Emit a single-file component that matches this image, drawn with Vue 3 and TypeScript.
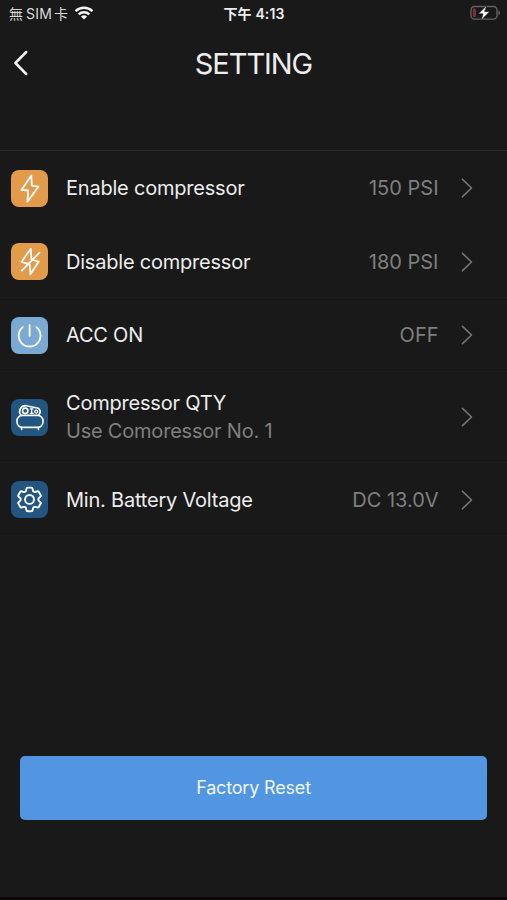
<script setup lang="ts">
type IconName = 'bolt' | 'bolt-off' | 'power' | 'compressor' | 'gear'

interface Setting {
  icon: IconName
  title: string
  note?: string
  value?: string
}

const settings: Setting[] = [
  { icon: 'bolt', title: 'Enable compressor', value: '150 PSI' },
  { icon: 'bolt-off', title: 'Disable compressor', value: '180 PSI' },
  { icon: 'power', title: 'ACC ON', value: 'OFF' },
  { icon: 'compressor', title: 'Compressor QTY', note: 'Use Comoressor No. 1' },
  { icon: 'gear', title: 'Min. Battery Voltage', value: 'DC 13.0V' },
]
</script>

<template>
  <main class="screen">
    <div class="status">
      <div class="carrier">
        <span>無<span class="latin">SIM</span>卡</span>
        <svg class="wifi" viewBox="0 0 20 14" width="20" height="14">
          <path d="M1.6 5.2a12.2 12.2 0 0 1 16.8 0M4.7 8.4a7.7 7.7 0 0 1 10.6 0" />
          <path class="dot" d="M10 13.6 6.9 10.6a4.5 4.5 0 0 1 6.2 0z" />
        </svg>
      </div>
      <div class="clock">下午 <span>4:13</span></div>
      <svg class="battery" viewBox="0 0 31 16" width="31" height="16">
        <rect class="shell" x="1" y="1.5" width="26" height="12.6" rx="3.6" />
        <path class="cap" d="M28.3 5.5c2.4.8 2.4 3.8 0 4.6z" />
        <rect class="level" x="2.8" y="3.5" width="3.2" height="8.6" rx="1" />
        <path class="charge" d="M16.6.8 8.4 8.8h4.6L11.2 15.2l8.5-8.7h-4.9z" />
      </svg>
    </div>

    <header class="bar">
      <svg class="back" viewBox="0 0 16 26" width="16" height="26">
        <path d="M13.2 2 2.4 13l10.8 11" />
      </svg>
      <h1>SETTING</h1>
    </header>

    <ul class="list">
      <li v-for="item in settings" :key="item.title" class="row" :class="{ tall: item.note }">
        <svg class="tile" :class="item.icon" viewBox="0 0 37 37" width="37" height="37">
          <path v-if="item.icon === 'bolt'" d="M20.3 5.4 10.4 19.9l6.7.6-.6 11.2L27.4 16.6l-6.6-1z" />
          <template v-else-if="item.icon === 'bolt-off'">
            <path d="M16.4 20.6 10.4 18.9 19.8 5.8l.6 10.4M21.6 16.8l6.2 1.8-8.4 12.6-.7-10M28.5 9.6 10.7 27.6" />
          </template>
          <path v-else-if="item.icon === 'power'" d="M18.6 7.8v11M11.8 10.1a10.9 10.9 0 1 0 13.6 0" />
          <template v-else-if="item.icon === 'compressor'">
            <rect x="6" y="16.4" width="26" height="12" rx="5.4" />
            <path d="M10.6 28.5v1.9M27.4 28.5v1.9M9.8 16A5.8 5.8 0 0 1 15 6.7l10.2 2a4 4 0 0 1 2.6 7" />
            <circle cx="14.2" cy="11.8" r="2.7" />
            <path class="fine" d="M19.3 9.8h2.8M20.7 9.8v4.6M19.3 14.4h2.8" />
            <circle class="fine" cx="25.2" cy="12.6" r="1.5" />
          </template>
          <template v-else>
            <g transform="translate(2.8 2.7) scale(1.31)">
              <path class="cog" d="M9.594 3.94c.09-.542.56-.94 1.11-.94h2.593c.55 0 1.02.398 1.11.94l.213 1.281c.063.374.313.686.645.87.074.04.147.083.22.127.325.196.72.257 1.075.124l1.217-.456a1.125 1.125 0 0 1 1.37.49l1.296 2.247a1.125 1.125 0 0 1-.26 1.431l-1.003.827c-.293.241-.438.613-.43.992a7.723 7.723 0 0 1 0 .255c-.008.378.137.75.43.991l1.004.827c.424.35.534.955.26 1.43l-1.298 2.247a1.125 1.125 0 0 1-1.369.491l-1.217-.456c-.355-.133-.75-.072-1.076.124a6.47 6.47 0 0 1-.22.128c-.331.183-.581.495-.644.869l-.213 1.281c-.09.543-.56.94-1.11.94h-2.594c-.55 0-1.019-.398-1.11-.94l-.213-1.281c-.062-.374-.312-.686-.644-.87a6.52 6.52 0 0 1-.22-.127c-.325-.196-.72-.257-1.076-.124l-1.217.456a1.125 1.125 0 0 1-1.369-.49l-1.297-2.247a1.125 1.125 0 0 1 .26-1.431l1.004-.827c.292-.24.437-.613.43-.991a6.932 6.932 0 0 1 0-.255c.007-.38-.138-.751-.43-.992l-1.004-.827a1.125 1.125 0 0 1-.26-1.43l1.297-2.247a1.125 1.125 0 0 1 1.37-.491l1.216.456c.356.133.751.072 1.076-.124.072-.044.146-.086.22-.128.332-.183.582-.495.644-.869l.214-1.28Z" />
              <circle class="cog" cx="12" cy="12" r="3.4" />
            </g>
          </template>
        </svg>
        <div class="label">
          <span class="title">{{ item.title }}</span>
          <span v-if="item.note" class="note">{{ item.note }}</span>
        </div>
        <span v-if="item.value" class="value">{{ item.value }}</span>
        <svg class="chevron" viewBox="0 0 12 20" width="12" height="20">
          <path d="M1.5 1.4 10.5 10l-9 8.6" />
        </svg>
      </li>
    </ul>

    <button class="reset" type="button">Factory Reset</button>
  </main>
</template>

<style>
body {
  background: #191919;
}
</style>

<style scoped>
.screen {
  box-sizing: border-box;
  display: flex;
  flex-direction: column;
  width: 507px;
  height: 900px;
  overflow: hidden;
  background: #191919;
  border-bottom: 3px solid #0d0709;
  color: #ededed;
  font-family: Inter, "Noto Sans CJK TC", sans-serif;
}
svg {
  display: block;
  flex: none;
  fill: none;
  stroke-linecap: round;
  stroke-linejoin: round;
}
.status {
  display: grid;
  grid-template-columns: 1fr auto 1fr;
  align-items: center;
  height: 26px;
  padding: 0 6px 0 9px;
  font-size: 14px;
}
.carrier {
  display: flex;
  align-items: center;
  gap: 6px;
  white-space: nowrap;
  color: #d8d8d8;
}
.latin {
  margin: 0 2px 0 3px;
  letter-spacing: 0.2px;
}
.wifi {
  stroke: #f4f4f4;
  stroke-width: 2.5;
  stroke-linecap: butt;
}
.wifi .dot {
  fill: #f4f4f4;
  stroke: none;
}
.clock {
  padding-right: 2px;
  font-weight: 600;
  letter-spacing: 0.15px;
}
.battery {
  justify-self: end;
}
.shell {
  stroke: #626262;
  stroke-width: 1.4;
}
.cap {
  fill: #626262;
}
.level {
  fill: #7c2f36;
}
.charge {
  fill: #fff;
  stroke: #191919;
  stroke-width: 0.6;
}
.bar {
  display: grid;
  grid-template-columns: 60px 1fr 60px;
  align-items: center;
  height: 74px;
}
.back {
  margin-left: 13px;
  stroke: #f0f0f0;
  stroke-width: 2.5;
}
h1 {
  margin: 0;
  text-align: center;
  font-size: 29px;
  font-weight: 400;
  letter-spacing: -1.05px;
}
.list {
  margin: 50px 0 0;
  padding: 0;
  list-style: none;
  border-top: 1px solid #2a2a2a;
}
.row {
  box-sizing: border-box;
  display: flex;
  align-items: center;
  height: 73.5px;
  padding: 1px 34.5px 0 10.6px;
  border-bottom: 1px solid #1d1d1d;
}
.row:first-child {
  border-bottom-color: transparent;
}
.row:not(.tall) {
  padding-top: 2px;
}
.tall {
  height: 91px;
}
.tile {
  border-radius: 8px;
  stroke: #fff;
  stroke-width: 1.8;
}
.bolt,
.bolt-off {
  background: #e29b4b;
}
.power {
  background: #7aaad3;
}
.compressor,
.gear {
  background: #225580;
}
.compressor {
  stroke-width: 1.6;
}
.fine {
  stroke-width: 1.3;
}
.cog {
  stroke-width: 1.45;
}
.label {
  display: flex;
  flex: 1;
  flex-direction: column;
  margin-left: 18.4px;
  font-size: 20px;
  line-height: 28px;
  letter-spacing: -0.21px;
}
.note,
.value {
  color: #7f7f7f;
}
.value {
  font-size: 20px;
}
.chevron {
  margin-left: 22px;
  stroke: #757575;
  stroke-width: 1.6;
}
.reset {
  height: 64px;
  margin: auto 20px 77.5px;
  padding: 0;
  border: 0;
  border-radius: 5px;
  background: #5296e2;
  color: #f0f6fd;
  font: 400 18px Inter, sans-serif;
  letter-spacing: -0.18px;
}
</style>
